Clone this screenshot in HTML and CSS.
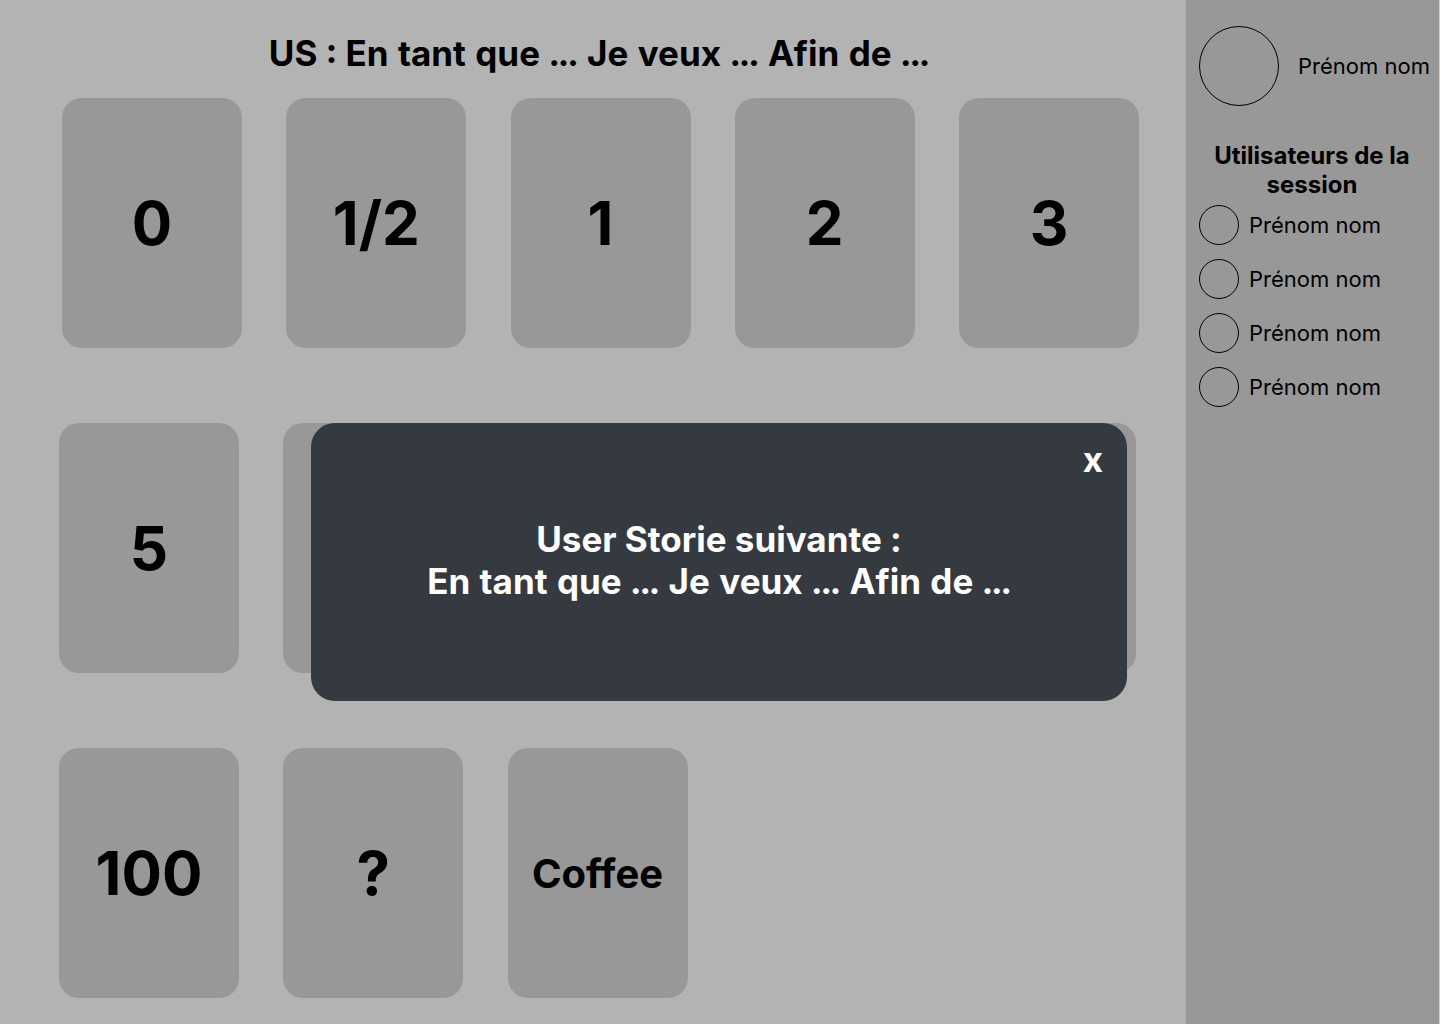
FILE: index.html
```html
<!DOCTYPE html>
<html lang="fr">
<head>
<meta charset="utf-8">
<title>Planning poker</title>
<meta name="viewport" content="width=device-width, initial-scale=1">
<link rel="stylesheet" href="styles.css">
</head>
<body>
<div class="app">
  <main class="board">
    <h1 class="story">US : En tant que ... Je veux ... Afin de ...</h1>
    <div class="rows">
      <div class="row row-first">
        <button class="card" type="button">0</button>
        <button class="card" type="button">1/2</button>
        <button class="card" type="button">1</button>
        <button class="card" type="button">2</button>
        <button class="card" type="button">3</button>
      </div>
      <div class="row">
        <button class="card" type="button">5</button>
        <button class="card" type="button" aria-label="Carte masquée"></button>
        <button class="card" type="button" aria-label="Carte masquée"></button>
        <button class="card" type="button" aria-label="Carte masquée"></button>
        <button class="card" type="button" aria-label="Carte masquée"></button>
      </div>
      <div class="row">
        <button class="card" type="button">100</button>
        <button class="card" type="button">?</button>
        <button class="card card-word" type="button">Coffee</button>
      </div>
    </div>
  </main>
  <aside class="sidebar">
    <div class="profile">
      <span class="avatar avatar-large"></span>
      <span>Prénom nom</span>
    </div>
    <h2 class="users-title">Utilisateurs de la session</h2>
    <ul class="users">
      <li class="user"><span class="avatar"></span>Prénom nom</li>
      <li class="user"><span class="avatar"></span>Prénom nom</li>
      <li class="user"><span class="avatar"></span>Prénom nom</li>
      <li class="user"><span class="avatar"></span>Prénom nom</li>
    </ul>
  </aside>
</div>
<div class="dialog" role="dialog" aria-labelledby="next-story">
  <button class="close" type="button" aria-label="Fermer">x</button>
  <p class="next-story" id="next-story">User Storie suivante :<br><span class="story-text">En tant que ... Je veux ... Afin de ...</span></p>
</div>
</body>
</html>
```
FILE: styles.css
```css
* {
  box-sizing: border-box;
}

body {
  margin: 0;
  background: #b3b3b3;
  color: #000;
  font-family: Inter, "Liberation Sans", sans-serif;
}

button {
  border: 0;
  color: inherit;
  font: inherit;
  cursor: pointer;
}

.app {
  display: flex;
  min-height: 100vh;
}

.board {
  flex: 1;
  padding: 32px 47px 26px 59px;
}

.story {
  margin: 0 0 24px;
  font-size: 35px;
  font-weight: 700;
  line-height: 42px;
  text-align: center;
}

.story,
.story-text {
  font-variant-numeric: tabular-nums;
}

.rows {
  display: grid;
  gap: 75px;
}

.row {
  display: grid;
  grid-template-columns: repeat(5, 180px);
  justify-content: space-between;
  padding-right: 3px;
}

.row-first {
  padding: 0 0 0 3px;
}

.card {
  height: 250px;
  padding: 0;
  border-radius: 20px;
  background: #989898;
  font-size: 60px;
  font-weight: 700;
}

.card-word {
  font-size: 40px;
}

.sidebar {
  width: 254px;
  padding: 26px 0 0 13px;
  border-right: 1px solid #ccc;
  background: #989898;
  font-size: 22px;
}

.profile {
  display: flex;
  align-items: center;
  gap: 19px;
  white-space: nowrap;
}

.avatar {
  flex: none;
  width: 40px;
  height: 40px;
  border: 1px solid #000;
  border-radius: 50%;
}

.avatar-large {
  width: 80px;
  height: 80px;
}

.users-title {
  margin: 35px 14px 6px 0;
  font-size: 24px;
  font-weight: 700;
  line-height: 29px;
  text-align: center;
}

.users {
  display: grid;
  gap: 14px;
  margin: 0;
  padding: 0;
  list-style: none;
}

.user {
  display: flex;
  align-items: center;
  gap: 10px;
}

.dialog {
  position: fixed;
  inset: 100px 2px 0 0;
  display: flex;
  flex-direction: column;
  width: 816px;
  height: 278px;
  margin: auto;
  padding: 15px 24px;
  border-radius: 24px;
  background: #343a40;
  color: #fff;
  font-size: 35px;
  font-weight: 700;
  line-height: 42px;
}

.close {
  align-self: flex-end;
  padding: 0;
  background: none;
}

.next-story {
  margin: 38px 0 0;
  text-align: center;
}
```
